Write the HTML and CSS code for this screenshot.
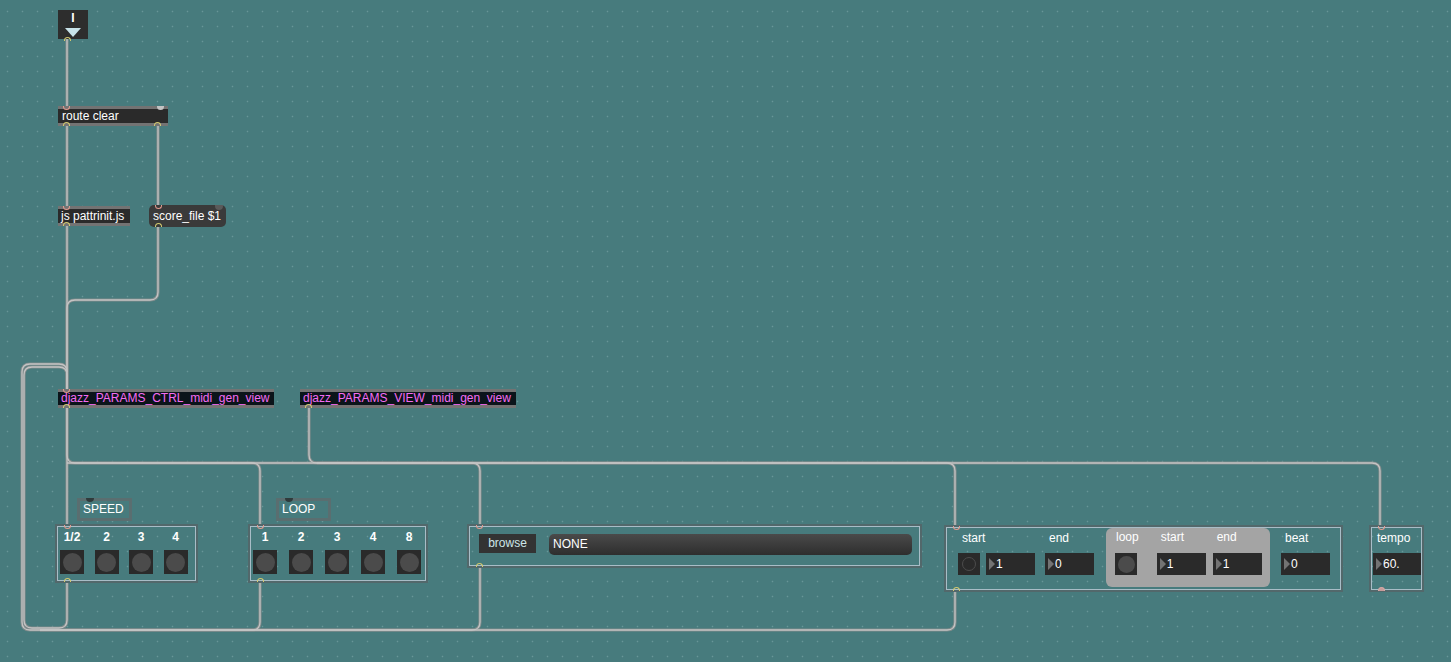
FILE: index.html
```html
<!DOCTYPE html>
<html>
<head>
<meta charset="utf-8">
<link rel="stylesheet" href="styles.css">
</head>
<body>
<div class="canvas">
  <svg class="cords" width="1451" height="662" viewBox="0 0 1451 662">
    <g class="cord-under">
      <path d="M67 39 V106"/>
      <path d="M67 126 V206"/>
      <path d="M158 126 V205"/>
      <path d="M67 226 V389"/>
      <path d="M158 227 V292 Q158 300 150 300 H75 Q67 300 67 308 V389"/>
      <path d="M67 581 V620 Q67 628 59 628 H32 Q24 628 24 620 V375 Q24 367 32 367 H59 Q67 367 67 375 V389"/>
      <path d="M955 589 V622 Q955 630 947 630 H30 Q22 630 22 622 V372 Q22 364 30 364 H59 Q67 364 67 372"/>
      <path d="M260 580 V622 Q260 630 252 630 H40"/>
      <path d="M480 565 V622 Q480 630 472 630 H40"/>
      <path d="M67 408 V526"/>
      <path d="M67 408 V455 Q67 463 75 463 H252 Q260 463 260 471 V526"/>
      <path d="M67 463 H472 Q480 463 480 471 V526"/>
      <path d="M309 408 V455 Q309 463 317 463 H947 Q955 463 955 471 V527"/>
      <path d="M317 463 H1372 Q1380 463 1380 471 V527"/>
    </g>
    <g class="cord-over">
      <path d="M67 39 V106"/>
      <path d="M67 126 V206"/>
      <path d="M158 126 V205"/>
      <path d="M67 226 V389"/>
      <path d="M158 227 V292 Q158 300 150 300 H75 Q67 300 67 308 V389"/>
      <path d="M67 581 V620 Q67 628 59 628 H32 Q24 628 24 620 V375 Q24 367 32 367 H59 Q67 367 67 375 V389"/>
      <path d="M955 589 V622 Q955 630 947 630 H30 Q22 630 22 622 V372 Q22 364 30 364 H59 Q67 364 67 372"/>
      <path d="M260 580 V622 Q260 630 252 630 H40"/>
      <path d="M480 565 V622 Q480 630 472 630 H40"/>
      <path d="M67 408 V526"/>
      <path d="M67 408 V455 Q67 463 75 463 H252 Q260 463 260 471 V526"/>
      <path d="M67 463 H472 Q480 463 480 471 V526"/>
      <path d="M309 408 V455 Q309 463 317 463 H947 Q955 463 955 471 V527"/>
      <path d="M317 463 H1372 Q1380 463 1380 471 V527"/>
    </g>
  </svg>

  <!-- inlet object -->
  <div class="node n-inlet">
    <span class="inlet-label">I</span>
    <svg class="inlet-arrow" width="16" height="10" viewBox="0 0 16 10"><polygon points="0,0 16,0 8,9" fill="#c8e3ea"/></svg>
    <span class="outlet"></span>
  </div>

  <div class="node box n-route">route clear<span class="inlet"></span><span class="outlet"></span><span class="outlet o-right"></span><span class="knob"></span></div>
  <div class="node box n-js">js pattrinit.js<span class="inlet"></span><span class="outlet"></span></div>
  <div class="node msg n-score">score_file $1<span class="inlet"></span><span class="outlet"></span><span class="knob dark"></span></div>

  <div class="node box send n-ctrl">djazz_PARAMS_CTRL_midi_gen_view<span class="inlet"></span><span class="outlet"></span></div>
  <div class="node box send n-view">djazz_PARAMS_VIEW_midi_gen_view<span class="outlet"></span></div>

  <div class="node comment n-speed-c"><span class="tab"></span>SPEED</div>
  <div class="node comment n-loop-c"><span class="tab"></span>LOOP</div>

  <div class="node panel n-speed">
    <div class="btn-row speed-row">
      <div class="col"><span class="lbl bold">1/2</span><span class="btn"><i></i></span></div>
      <div class="col"><span class="lbl bold">2</span><span class="btn"><i></i></span></div>
      <div class="col"><span class="lbl bold">3</span><span class="btn"><i></i></span></div>
      <div class="col"><span class="lbl bold">4</span><span class="btn"><i></i></span></div>
    </div>
    <span class="inlet"></span><span class="outlet"></span>
  </div>

  <div class="node panel n-loop">
    <div class="btn-row loop-row">
      <div class="col"><span class="lbl bold">1</span><span class="btn"><i></i></span></div>
      <div class="col"><span class="lbl bold">2</span><span class="btn"><i></i></span></div>
      <div class="col"><span class="lbl bold">3</span><span class="btn"><i></i></span></div>
      <div class="col"><span class="lbl bold">4</span><span class="btn"><i></i></span></div>
      <div class="col"><span class="lbl bold">8</span><span class="btn"><i></i></span></div>
    </div>
    <span class="inlet"></span><span class="outlet"></span>
  </div>

  <div class="node panel n-browse">
    <div class="browse-row">
      <span class="browse-btn">browse</span>
      <span class="file-field">NONE</span>
    </div>
    <span class="inlet"></span><span class="outlet"></span>
  </div>

  <div class="node panel n-start">
    <div class="start-row">
      <div class="scol g-start">
        <span class="lbl">start</span>
        <div class="ctl-row">
          <span class="toggle"><i></i></span>
          <span class="num"><b></b>1</span>
        </div>
      </div>
      <div class="scol g-end">
        <span class="lbl">end</span>
        <span class="num"><b></b>0</span>
      </div>
      <div class="subpanel">
        <div class="scol g-sloop">
          <span class="lbl">loop</span>
          <span class="btn small"><i></i></span>
        </div>
        <div class="scol g-sstart">
          <span class="lbl">start</span>
          <span class="num"><b></b>1</span>
        </div>
        <div class="scol g-send">
          <span class="lbl">end</span>
          <span class="num"><b></b>1</span>
        </div>
      </div>
      <div class="scol g-beat">
        <span class="lbl">beat</span>
        <span class="num"><b></b>0</span>
      </div>
    </div>
    <span class="inlet"></span><span class="outlet"></span>
  </div>

  <div class="node panel n-tempo">
    <div class="scol g-tempo">
      <span class="lbl">tempo</span>
      <span class="num tempo-num"><b></b>60.</span>
    </div>
    <span class="inlet"></span><span class="outlet pinkish"></span>
  </div>
</div>
</body>
</html>
```

FILE: styles.css
```css
html, body {
  margin: 0;
  padding: 0;
  background: #477b7d;
}

.canvas {
  position: relative;
  width: 1451px;
  height: 662px;
  overflow: hidden;
  background-color: #477b7d;
  background-image: radial-gradient(circle at center, rgba(175, 210, 210, 0.32) 0.6px, transparent 1.1px);
  background-size: 15px 15px;
  background-position: 0px 4px;
  font-family: "Liberation Sans", Arial, sans-serif;
  font-size: 12px;
  color: #ffffff;
}

.cords {
  position: absolute;
  left: 0;
  top: 0;
}

.cord-under path {
  fill: none;
  stroke: #7f8b8b;
  stroke-width: 3.2;
}

.cord-over path {
  fill: none;
  stroke: #c4c4c4;
  stroke-width: 1.3;
}

.node {
  position: absolute;
  box-sizing: border-box;
}

/* inlet / outlet markers */
.inlet, .outlet {
  position: absolute;
  left: 5px;
  width: 7px;
  height: 4px;
  box-sizing: border-box;
}

.inlet {
  top: -3px;
  border: 1.5px solid #e39b8f;
  border-top: none;
  border-radius: 0 0 4px 4px;
}

.outlet {
  bottom: -3px;
  border: 1.5px solid #d3c970;
  border-bottom: none;
  border-radius: 4px 4px 0 0;
}

.outlet.pinkish {
  left: 6px;
  border-color: #d4a7a5;
  background: #c89c9a;
}

/* inlet object */
.n-inlet {
  left: 58px;
  top: 10px;
  width: 30px;
  height: 29px;
  background: #2d2d2d;
}

.inlet-label {
  position: absolute;
  left: 0;
  right: 0;
  top: 1px;
  text-align: center;
  font-weight: bold;
  font-size: 12px;
  line-height: 14px;
}

.inlet-arrow {
  position: absolute;
  left: 7px;
  top: 18px;
}

.n-inlet .outlet {
  left: 6px;
  bottom: -2px;
}

/* object boxes */
.box {
  height: 20px;
  background: #2a2a2a;
  border-top: 3px solid #737373;
  border-bottom: 3px solid #737373;
  padding: 0 4px;
  font-size: 12px;
  line-height: 14px;
  white-space: nowrap;
}

.box .inlet { top: -3px; }
.box .outlet { bottom: -3px; }

.n-route {
  left: 58px;
  top: 106px;
  width: 110px;
}

.n-route .o-right {
  left: 96px;
}

.knob {
  position: absolute;
  right: 4px;
  top: -3px;
  width: 7px;
  height: 4px;
  background: #c4c4c4;
  border-radius: 0 0 4px 4px;
}

.knob.dark {
  background: #5a5a5a;
  right: 3px;
  top: 0;
  width: 8px;
  height: 5px;
}

.n-js {
  left: 58px;
  top: 206px;
  width: 72px;
  padding-left: 3px;
}

.msg {
  height: 22px;
  background: #3a3a3a;
  border-radius: 5px;
  padding: 0 4px;
  line-height: 22px;
  font-size: 12px;
  white-space: nowrap;
}

.n-score {
  left: 149px;
  top: 205px;
  width: 77px;
}

.n-score .inlet { top: 0; left: 6px; }
.n-score .outlet { bottom: 0; left: 6px; }

.send {
  height: 19px;
  background: #0b141a;
  color: #f46cf3;
  padding-left: 3px;
  line-height: 13px;
}

.n-ctrl {
  left: 58px;
  top: 389px;
  width: 216px;
}

.n-view {
  left: 300px;
  top: 389px;
  width: 216px;
}

/* comments */
.comment {
  height: 23px;
  border: 3px solid #5a6e70;
  background: #477b7d;
  padding-left: 3px;
  line-height: 17px;
  font-size: 12px;
}

.tab {
  position: absolute;
  left: 6px;
  top: -3px;
  width: 8px;
  height: 4px;
  background: #2f3a3b;
  border-radius: 0 0 4px 4px;
}

.n-speed-c {
  left: 77px;
  top: 498px;
  width: 55px;
}

.n-loop-c {
  left: 276px;
  top: 498px;
  width: 55px;
}

/* panels */
.panel {
  border: 1px solid #a8bdc7;
  box-shadow: 0 0 0 2px #52686b;
}

.panel .inlet { top: -2px; left: 6px; }
.panel .outlet { bottom: -2px; left: 6px; }

.n-speed {
  left: 57px;
  top: 526px;
  width: 139px;
  height: 55px;
}

.n-loop {
  left: 250px;
  top: 526px;
  width: 176px;
  height: 55px;
}

.btn-row {
  display: flex;
  padding-top: 3px;
}

.speed-row {
  padding-left: 2px;
  gap: 10.5px;
}

.loop-row {
  padding-left: 2px;
  gap: 12px;
}

.col {
  display: flex;
  flex-direction: column;
  align-items: center;
  width: 24px;
}

.lbl {
  display: block;
  height: 14px;
  line-height: 14px;
  font-size: 12px;
  white-space: nowrap;
}

.lbl.bold {
  font-weight: bold;
}

.btn {
  display: flex;
  align-items: center;
  justify-content: center;
  width: 24px;
  height: 24px;
  margin-top: 6px;
  background: #2a2a2a;
}

.btn i {
  display: block;
  width: 19px;
  height: 19px;
  border-radius: 50%;
  background: #4b4b4b;
}

.btn.small {
  width: 22px;
  height: 22px;
  margin-top: 8px;
}

.btn.small i {
  width: 17px;
  height: 17px;
}

/* browse */
.n-browse {
  left: 469px;
  top: 526px;
  width: 451px;
  height: 40px;
}

.browse-row {
  display: flex;
  align-items: flex-start;
  padding: 7px 0 0 9px;
  gap: 13px;
}

.browse-btn {
  display: block;
  width: 57px;
  height: 19px;
  line-height: 19px;
  text-align: center;
  background: #333333;
  color: #cde6e8;
  font-size: 12px;
}

.file-field {
  display: block;
  width: 363px;
  height: 21px;
  line-height: 21px;
  padding-left: 4px;
  box-sizing: border-box;
  border-radius: 5px;
  background: linear-gradient(#4a4a4a, #2e2e2e);
  font-size: 12px;
}

/* start panel */
.n-start {
  left: 946px;
  top: 527px;
  width: 395px;
  height: 63px;
}

.start-row {
  display: flex;
  align-items: flex-start;
}

.scol {
  display: flex;
  flex-direction: column;
  align-items: flex-start;
  padding-top: 3px;
}

.scol .lbl {
  padding-left: 4px;
}

.ctl-row {
  display: flex;
  gap: 6px;
  margin-top: 8px;
}

.g-start { margin-left: 11px; }
.g-end { margin-left: 10px; }
.g-end .num, .g-beat .num, .g-sstart .num, .g-send .num { margin-top: 8px; }

.toggle {
  display: flex;
  align-items: center;
  justify-content: center;
  width: 22px;
  height: 22px;
  background: #2a2a2a;
}

.toggle i {
  display: block;
  width: 12px;
  height: 12px;
  border-radius: 50%;
  border: 1.5px solid #4c4c4c;
}

.num {
  position: relative;
  display: block;
  width: 49px;
  height: 22px;
  line-height: 22px;
  background: #2a2a2a;
  padding-left: 10px;
  box-sizing: border-box;
  font-size: 12px;
}

.num b {
  position: absolute;
  left: 3px;
  top: 5px;
  width: 0;
  height: 0;
  border-top: 6px solid transparent;
  border-bottom: 6px solid transparent;
  border-left: 6px solid #737373;
}

.subpanel {
  display: flex;
  align-items: flex-start;
  margin-left: 12px;
  width: 164px;
  height: 59px;
  background: #a4a4a4;
  border-radius: 6px;
}

.subpanel .scol {
  padding-top: 2px;
}

.subpanel .num {
  margin-top: 9px;
}

.g-sloop { margin-left: 9px; }
.g-sloop .lbl { padding-left: 1px; }
.g-sloop .btn.small { margin-top: 9px; }
.g-sstart { margin-left: 18px; }
.g-send { margin-left: 7px; }
.g-beat { margin-left: 11px; }

/* tempo */
.n-tempo {
  left: 1371px;
  top: 527px;
  width: 51px;
  height: 63px;
}

.g-tempo .lbl {
  padding-left: 5px;
}

.tempo-num {
  width: 48px;
  margin-left: 1px;
  margin-top: 8px;
}
```
